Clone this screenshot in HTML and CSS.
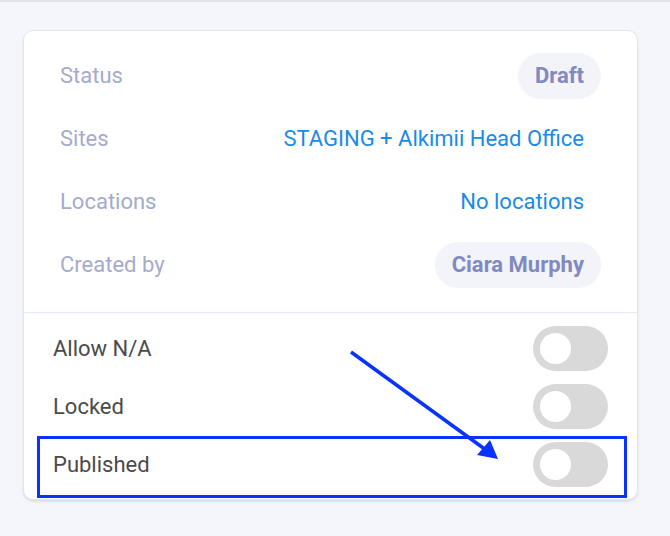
FILE: index.html
```html
<!DOCTYPE html>
<html lang="en">
<head>
<meta charset="UTF-8">
<meta name="viewport" content="width=device-width, initial-scale=1.0">
<title>Checklist details</title>
<link rel="stylesheet" href="styles.css">
</head>
<body>
<div class="page">
    <div class="card">
        <div class="details">
            <div class="row">
                <span class="label">Status</span>
                <span class="value pill">Draft</span>
            </div>
            <div class="row">
                <span class="label">Sites</span>
                <span class="value link">STAGING + Alkimii Head Office</span>
            </div>
            <div class="row">
                <span class="label">Locations</span>
                <span class="value link">No locations</span>
            </div>
            <div class="row">
                <span class="label">Created by</span>
                <span class="value pill">Ciara Murphy</span>
            </div>
        </div>
        <div class="options">
            <div class="option">
                <span>Allow N/A</span>
                <span class="toggle"></span>
            </div>
            <div class="option">
                <span>Locked</span>
                <span class="toggle"></span>
            </div>
            <div class="option">
                <span>Published</span>
                <span class="toggle"></span>
            </div>
        </div>
    </div>

    <!-- annotation drawn over the screenshot -->
    <div class="highlight"></div>
    <svg class="arrow" width="670" height="536" viewBox="0 0 670 536">
        <line x1="351" y1="352" x2="486" y2="450" stroke="#0a32ff" stroke-width="3.5"/>
        <polygon points="498,459 477,455 490,440" fill="#0a32ff"/>
    </svg>
</div>
</body>
</html>
```

FILE: styles.css
```css
body {
    margin: 0;
    font-family: Roboto, "Liberation Sans", sans-serif;
    background-color: #f5f6fb;
}
.page {
    position: relative;
    height: 534px;
    border-top: 2px solid #dfe3ec;
    padding: 28px 0 0 23px;
    box-sizing: border-box;
}
.card {
    width: 615px;
    background-color: #fff;
    border: 1px solid #e2e5ef;
    border-radius: 10px;
    box-sizing: border-box;
    box-shadow: 0 2px 2px rgba(200, 205, 220, 0.5);
}
.details {
    padding: 13px 36px 16px 36px;
    border-bottom: 1px solid #e6e8f2;
}
.row {
    display: flex;
    justify-content: space-between;
    align-items: center;
    height: 63px;
    font-size: 22px;
}
.label {
    color: #a4abcc;
}
.value {
    padding: 0 17px;
    line-height: 46px;
}
.pill {
    background-color: #f3f3fa;
    border-radius: 23px;
    color: #8189c0;
    font-weight: bold;
}
.link {
    color: #1a8be6;
}
.options {
    display: flex;
    flex-direction: column;
    gap: 14px;
    padding: 13px 29px 13px 29px;
}
.option {
    display: flex;
    justify-content: space-between;
    align-items: center;
    height: 44px;
    font-size: 22px;
    color: #4a4a4a;
}
.toggle {
    position: relative;
    width: 75px;
    height: 45px;
    border-radius: 23px;
    background-color: #d9d9d9;
}
.toggle::after {
    content: "";
    position: absolute;
    left: 7px;
    top: 7px;
    width: 31px;
    height: 31px;
    border-radius: 50%;
    background-color: #fff;
}
.highlight {
    position: absolute;
    left: 37px;
    top: 434px;
    width: 590px;
    height: 62px;
    border: 3px solid #0a32ff;
    box-sizing: border-box;
}
.arrow {
    position: absolute;
    left: 0;
    top: -2px;
}
```
